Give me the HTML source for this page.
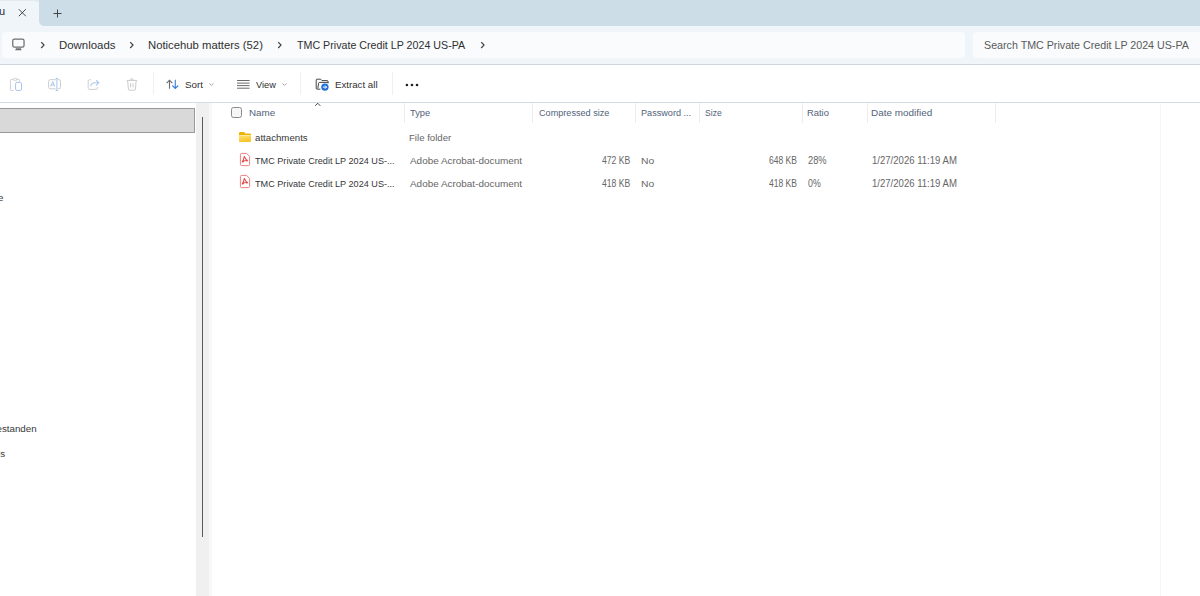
<!DOCTYPE html>
<html><head><meta charset="utf-8">
<style>
*{margin:0;padding:0;box-sizing:border-box}
html,body{width:1200px;height:596px;overflow:hidden;background:#fff;font-family:"Liberation Sans",sans-serif}
.a{position:absolute;white-space:nowrap}
#tabs{position:absolute;left:39px;top:0;width:1161px;height:25.5px;background:#ccdde8;border-bottom-left-radius:5px}
#tabtop{position:absolute;left:0;top:0;width:40px;height:2px;background:#e3ebf1}
#tab{position:absolute;left:-20px;top:1px;width:59px;height:26px;background:#f0f5f9;border-radius:6px 6px 0 0}
#addr{position:absolute;left:0;top:0;width:1200px;height:64px;background:#f0f5f9}
#crumb{position:absolute;left:2px;top:32px;width:963px;height:25.5px;background:#f9fbfd;border-radius:4px}
#search{position:absolute;left:973px;top:32px;width:240px;height:25.5px;background:#f9fbfd;border-radius:4px}
#addrline{position:absolute;left:0;top:64px;width:1200px;height:1px;background:#cfd5db}
#tbline{position:absolute;left:0;top:102px;width:1200px;height:1px;background:#d3dbe3}
.t11{font-size:11px;color:#303030}
.tb{font-size:9.5px;color:#303030}
.sep{position:absolute;width:1px;background:#f0f0f0}
#navsel{position:absolute;left:-2px;top:108px;width:197px;height:25px;background:#d9d9d9;border:1px solid #999}
#scrstrip{position:absolute;left:196px;top:103px;width:13px;height:493px;background:#f0f0f0}
#thumb{position:absolute;left:201.6px;top:117px;width:1.3px;height:420px;background:#5a5a5a}
.hd{font-size:9.5px;color:#52627a}
.hsep{position:absolute;top:103px;width:1px;height:19.5px;background:#ebedef}
.row{font-size:9.5px}
.nm{color:#363636}
.gr{color:#666}
</style></head><body>
<div id="addr"></div>
<div id="tabtop"></div>
<div id="tabs"></div>
<div id="tab"></div>
<div id="crumb"></div>
<div id="search"></div>
<div id="addrline"></div>
<div id="tbline"></div>

<!-- tab text -->
<div class="a" style="left:-1px;top:5px;font-size:11px;color:#2a2a2a">u</div>
<svg class="a" style="left:17px;top:8px" width="10" height="10" viewBox="0 0 10 10"><path d="M1.8 1.2L8.8 8.2M8.8 1.2L1.8 8.2" stroke="#3c3c3c" stroke-width="0.95" fill="none"/></svg>
<svg class="a" style="left:52px;top:8px" width="11" height="11" viewBox="0 0 11 11"><path d="M5.5 1.5V9.5M1.5 5.5H9.5" stroke="#3c3c3c" stroke-width="0.95" fill="none"/></svg>

<!-- breadcrumb -->
<svg class="a" style="left:0;top:30px" width="50" height="25" viewBox="0 30 50 25"><rect x="12.75" y="39.15" width="11.3" height="7.95" rx="1.7" stroke="#6e6e6e" stroke-width="1.25" fill="none"/><path d="M15.2 50.2L16 48.2H20.8L21.6 50.2Z" fill="#6e6e6e"/><path d="M41.2 42.2L44 45.1L41.2 48" stroke="#404040" stroke-width="1.2" fill="none"/></svg>
<div class="a t11" style="left:59.36px;top:39.00px;font-size:11px;transform:scaleX(1.0377);transform-origin:0 0;">Downloads</div>
<svg class="a" style="left:129px;top:41px" width="6" height="8" viewBox="0 0 6 8"><path d="M1.2 1.2L4 4.1L1.2 7" stroke="#404040" stroke-width="1.2" fill="none"/></svg>
<div class="a t11" style="left:147.97px;top:39.00px;font-size:11px;transform:scaleX(1.0270);transform-origin:0 0;">Noticehub matters (52)</div>
<svg class="a" style="left:277px;top:41px" width="6" height="8" viewBox="0 0 6 8"><path d="M1.2 1.2L4 4.1L1.2 7" stroke="#404040" stroke-width="1.2" fill="none"/></svg>
<div class="a t11" style="left:297.00px;top:39.00px;font-size:11px;transform:scaleX(0.9711);transform-origin:0 0;">TMC Private Credit LP 2024 US-PA</div>
<svg class="a" style="left:480px;top:41px" width="6" height="8" viewBox="0 0 6 8"><path d="M1.2 1.2L4 4.1L1.2 7" stroke="#404040" stroke-width="1.2" fill="none"/></svg>
<div class="a t11" style="left:984.03px;top:39.00px;font-size:11px;transform:scaleX(0.9714);transform-origin:0 0;color:#5a5a5a;">Search TMC Private Credit LP 2024 US-PA</div>

<!-- toolbar -->
<svg class="a" style="left:0;top:70px" width="430" height="30" viewBox="0 70 430 30">
<!-- copy -->
<path d="M13.6 90.4H11.2Q10.4 90.4 10.4 89.6V80.6Q10.4 79.4 11.6 79.4H13.2M16.4 79.4H18.6Q19.6 79.4 19.6 80.4V81.6" stroke="#cfcfcf" stroke-width="1" fill="none"/>
<rect x="13.4" y="78.3" width="3.6" height="2" rx="0.8" stroke="#cfcfcf" stroke-width="0.9" fill="none"/>
<rect x="15.6" y="82.3" width="5.9" height="8.2" rx="1.4" stroke="#a9c6ee" stroke-width="1" fill="none"/>
<!-- rename -->
<path d="M55.8 79.7H50.2Q48.6 79.7 48.6 81.3V87.2Q48.6 88.8 50.2 88.8H55.8M58 79.7H59Q60.5 79.7 60.5 81.3V87.2Q60.5 88.8 59 88.8H58" stroke="#cdcdcd" stroke-width="1" fill="none"/>
<path d="M50.6 86.6L52.7 81.6L54.8 86.6M51.4 85H54" stroke="#a9c6ee" stroke-width="1" fill="none"/>
<path d="M56.9 78.4V90.5M55.7 78.4H58.1M55.7 90.5H58.1" stroke="#a9c6ee" stroke-width="1" fill="none"/>
<!-- share -->
<path d="M91 79.8H89.4Q88.2 79.8 88.2 81V88.2Q88.2 89.4 89.4 89.4H96.2Q97.4 89.4 97.4 88.2V87" stroke="#cfcfcf" stroke-width="1" fill="none"/>
<path d="M90.6 86.4Q91.2 82.6 95.4 82.8H98.4M96.2 80.2L98.8 82.8L96.2 85.4" stroke="#aac8f0" stroke-width="1.1" fill="none"/>
<!-- trash -->
<path d="M126.6 80.4H137M127.6 80.4L128.4 89.2Q128.5 90.2 129.4 90.2H134.4Q135.3 90.2 135.4 89.2L136.2 80.4M130.4 80.2Q130.4 78.6 131.8 78.6Q133.2 78.6 133.2 80.2M130.6 83.2V87.4M133 83.2V87.4" stroke="#cbcbcb" stroke-width="1" fill="none"/>
<!-- sort -->
<path d="M169.5 80.2V88.8M166.6 83.2L169.5 80.2L172.4 83.2" stroke="#6a6a6a" stroke-width="1.1" fill="none"/>
<path d="M175.3 79.8V88.4M172.4 85.5L175.3 88.4L178.2 85.5" stroke="#3b7ddd" stroke-width="1.1" fill="none"/>
<path d="M209.4 83.4L211.4 85.4L213.4 83.4" stroke="#9a9a9a" stroke-width="0.9" fill="none"/>
<!-- view -->
<path d="M237 80.5H249.6M237 83.1H249.6M237 85.6H249.6M237 88.2H249.6" stroke="#6a6a6a" stroke-width="1" fill="none"/>
<path d="M282.4 83.4L284.4 85.4L286.4 83.4" stroke="#9a9a9a" stroke-width="0.9" fill="none"/>
<!-- extract -->
<path d="M320.4 89.2H317.2Q316.2 89.2 316.2 88.2V80Q316.2 79.2 317 79.2H320.6L322 80.6H327.2Q328 80.6 328 81.4V83.4M317.8 88.6L318.6 83.2Q318.8 82.4 319.6 82.4H328.4" stroke="#3c3c3c" stroke-width="0.95" fill="none"/>
<circle cx="324.9" cy="87.1" r="3.7" fill="#1f6fd6"/>
<path d="M322.9 87.1H326.6M325 85.5L326.6 87.1L325 88.7" stroke="#fff" stroke-width="1" fill="none"/>
<!-- dots -->
<circle cx="406.9" cy="85" r="1.3" fill="#202020"/><circle cx="412" cy="85" r="1.3" fill="#202020"/><circle cx="417" cy="85" r="1.3" fill="#202020"/>
</svg>

<div class="sep" style="left:153px;top:72px;height:23px"></div>
<div class="sep" style="left:300px;top:72px;height:23px"></div>
<div class="sep" style="left:392px;top:72px;height:23px"></div>
<div class="a tb" style="left:184.67px;top:79.00px;font-size:9.5px;transform:scaleX(1.0294);transform-origin:0 0;">Sort</div>
<div class="a tb" style="left:256.30px;top:79.00px;font-size:9.5px;transform:scaleX(0.9714);transform-origin:0 0;">View</div>
<div class="a tb" style="left:334.58px;top:79.00px;font-size:9.5px;transform:scaleX(1.0200);transform-origin:0 0;">Extract all</div>

<!-- nav -->
<div id="navsel"></div>
<div id="scrstrip"></div>
<div class="a" style="left:209px;top:103px;width:2.5px;height:493px;background:#f8f8f8"></div>
<div id="thumb"></div>
<div class="a" style="left:-7px;top:192px;font-size:9.75px;color:#383838">se</div>
<div class="a" style="left:-10px;top:423px;font-size:9.75px;color:#383838">Bestanden</div>
<div class="a" style="left:-2px;top:448px;font-size:9.75px;color:#383838">ls</div>

<!-- header -->
<div class="hsep" style="left:404px"></div>
<div class="hsep" style="left:532px"></div>
<div class="hsep" style="left:635px"></div>
<div class="hsep" style="left:699px"></div>
<div class="hsep" style="left:802px"></div>
<div class="hsep" style="left:867px"></div>
<div class="hsep" style="left:995px"></div>
<div class="a" style="left:231px;top:107px;width:11px;height:11px;border:1px solid #8a8a8a;border-radius:2.5px;background:#f6f6f6"></div>
<div class="a hd" style="left:249.19px;top:107.00px;font-size:9.75px;transform:scaleX(1.0080);transform-origin:0 0;">Name</div>
<div class="a hd" style="left:409.90px;top:107.00px;font-size:9.75px;transform:scaleX(0.9571);transform-origin:0 0;">Type</div>
<div class="a hd" style="left:538.80px;top:107.00px;font-size:9.75px;transform:scaleX(0.9347);transform-origin:0 0;">Compressed size</div>
<div class="a hd" style="left:640.67px;top:107.00px;font-size:9.75px;transform:scaleX(0.9346);transform-origin:0 0;">Password ...</div>
<div class="a hd" style="left:704.72px;top:107.00px;font-size:9.75px;transform:scaleX(0.8833);transform-origin:0 0;">Size</div>
<div class="a hd" style="left:807.34px;top:107.00px;font-size:9.75px;transform:scaleX(0.9636);transform-origin:0 0;">Ratio</div>
<div class="a hd" style="left:871.48px;top:107.00px;font-size:9.75px;transform:scaleX(1.0169);transform-origin:0 0;">Date modified</div>

<svg class="a" style="left:230px;top:100px" width="30" height="90" viewBox="230 100 30 90">
<!-- folder -->
<defs><linearGradient id="fg" x1="0" y1="0" x2="0.3" y2="1"><stop offset="0" stop-color="#ffe27a"/><stop offset="1" stop-color="#f8c62a"/></linearGradient></defs>
<path d="M239 133.2Q239 132 240.2 132H243.4Q244.2 132 244.6 132.6L245.4 133.6H249.8Q251 133.6 251 134.8V140.6Q251 141.8 249.8 141.8H240.2Q239 141.8 239 140.6Z" fill="#efb100"/>
<path d="M239 135.8Q239 135.1 239.7 135.1H250.3Q251 135.1 251 135.8V140.8Q251 141.8 250 141.8H240Q239 141.8 239 140.8Z" fill="url(#fg)"/>
<path d="M239.3 135.5H250.7" stroke="#fff0b8" stroke-width="0.6"/>
</svg>
<svg class="a" style="left:310px;top:100px" width="15" height="10" viewBox="310 100 15 10"><path d="M315.2 105.8L317.7 103.2L320.3 105.8" stroke="#444" stroke-width="1" fill="none"/></svg>
<!-- rows -->
<div class="a row nm" style="left:254.70px;top:132.00px;font-size:9.75px;transform:scaleX(0.9925);transform-origin:0 0;">attachments</div>
<div class="a row gr" style="left:408.91px;top:132.00px;font-size:9.75px;transform:scaleX(0.9857);transform-origin:0 0;">File folder</div>

<svg class="a" style="left:238px;top:152px" width="14" height="15" viewBox="0 0 14 15"><path d="M3.6 1.4H8.6L11.6 4.4V12.4Q11.6 13.6 10.4 13.6H3.6Q2.4 13.6 2.4 12.4V2.6Q2.4 1.4 3.6 1.4Z" stroke="#ee8080" stroke-width="1" fill="#fff"/><path d="M6.3 4.6L4.8 9.6M6.3 4.6L8.6 8.6M4.8 9.6Q6.6 8.2 9.2 8.7" stroke="#e84a4a" stroke-width="1.1" fill="none" stroke-linecap="round"/><circle cx="4.8" cy="9.5" r="1.05" fill="#e84a4a"/><circle cx="8.9" cy="8.6" r="1" fill="#e84a4a"/></svg>
<div class="a row nm" style="left:254.70px;top:155.00px;font-size:9.75px;transform:scaleX(0.9349);transform-origin:0 0;">TMC Private Credit LP 2024 US-...</div>
<div class="a row gr" style="left:409.90px;top:155.00px;font-size:9.75px;transform:scaleX(1.0182);transform-origin:0 0;">Adobe Acrobat-document</div>
<div class="a row gr" style="left:601.50px;top:155.00px;font-size:10.25px;transform:scaleX(0.8394);transform-origin:0 0;">472 KB</div>
<div class="a row gr" style="left:640.55px;top:155.00px;font-size:9.75px;transform:scaleX(1.0545);transform-origin:0 0;">No</div>
<div class="a row gr" style="left:768.70px;top:155.00px;font-size:10.25px;transform:scaleX(0.8333);transform-origin:0 0;">648 KB</div>
<div class="a row gr" style="left:807.90px;top:155.00px;font-size:10.25px;transform:scaleX(0.9050);transform-origin:0 0;">28%</div>
<div class="a row gr" style="left:871.57px;top:155.00px;font-size:10.25px;transform:scaleX(0.9326);transform-origin:0 0;">1/27/2026 11:19 AM</div>

<svg class="a" style="left:238px;top:174px" width="14" height="15" viewBox="0 0 14 15"><path d="M3.6 1.4H8.6L11.6 4.4V12.4Q11.6 13.6 10.4 13.6H3.6Q2.4 13.6 2.4 12.4V2.6Q2.4 1.4 3.6 1.4Z" stroke="#ee8080" stroke-width="1" fill="#fff"/><path d="M6.3 4.6L4.8 9.6M6.3 4.6L8.6 8.6M4.8 9.6Q6.6 8.2 9.2 8.7" stroke="#e84a4a" stroke-width="1.1" fill="none" stroke-linecap="round"/><circle cx="4.8" cy="9.5" r="1.05" fill="#e84a4a"/><circle cx="8.9" cy="8.6" r="1" fill="#e84a4a"/></svg>
<div class="a row nm" style="left:254.70px;top:177.50px;font-size:9.75px;transform:scaleX(0.9349);transform-origin:0 0;">TMC Private Credit LP 2024 US-...</div>
<div class="a row gr" style="left:409.90px;top:177.50px;font-size:9.75px;transform:scaleX(1.0182);transform-origin:0 0;">Adobe Acrobat-document</div>
<div class="a row gr" style="left:601.50px;top:177.50px;font-size:10.25px;transform:scaleX(0.8394);transform-origin:0 0;">418 KB</div>
<div class="a row gr" style="left:640.55px;top:177.50px;font-size:9.75px;transform:scaleX(1.0545);transform-origin:0 0;">No</div>
<div class="a row gr" style="left:768.70px;top:177.50px;font-size:10.25px;transform:scaleX(0.8333);transform-origin:0 0;">418 KB</div>
<div class="a row gr" style="left:807.90px;top:177.50px;font-size:10.25px;transform:scaleX(0.8600);transform-origin:0 0;">0%</div>
<div class="a row gr" style="left:871.57px;top:177.50px;font-size:10.25px;transform:scaleX(0.9326);transform-origin:0 0;">1/27/2026 11:19 AM</div>

<div class="a" style="left:1160px;top:104px;width:1px;height:492px;background:#f6f6f6"></div>
</body></html>
